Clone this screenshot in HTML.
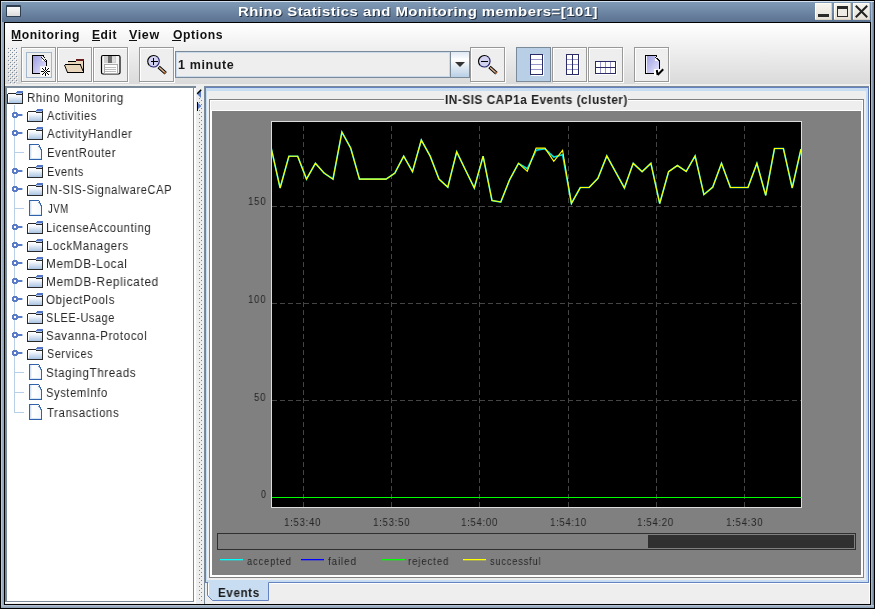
<!DOCTYPE html>
<html><head><meta charset="utf-8"><style>
html,body{margin:0;padding:0;width:875px;height:609px;overflow:hidden;background:#000}
body{position:relative;font-family:"Liberation Sans", sans-serif}
</style></head><body>
<div style="position:absolute;left:0px;top:0px;width:875px;height:609px;background:#000"></div>
<div style="position:absolute;left:1px;top:1px;width:873px;height:607px;background:linear-gradient(90deg,#c9d6e4 0px,#9fb2c7 1px,#8ea3ba 3px)"></div>
<div style="position:absolute;left:1px;top:1px;width:873px;height:1px;background:#d4e0ec"></div>
<div style="position:absolute;left:2px;top:2px;width:871px;height:20px;background:linear-gradient(#7f9ab6,#5b7290)"></div>
<div style="position:absolute;left:1px;top:605px;width:873px;height:3px;background:linear-gradient(#b9c7d6,#8598ae)"></div>
<div style="position:absolute;left:871px;top:2px;width:3px;height:603px;background:linear-gradient(90deg,#b8c6d5,#5f7590)"></div>
<div style="position:absolute;left:4px;top:22px;width:867px;height:583px;background:#000"></div>
<div style="position:absolute;left:6px;top:5px;width:15px;height:12px;background:#2f3f52;border-radius:1px"></div>
<div style="position:absolute;left:7px;top:7px;width:13px;height:9px;background:linear-gradient(#fafafa,#dcdcdc)"></div>
<div style="position:absolute;left:815px;top:3px;width:17px;height:17px;background:#d9d2c4"></div>
<div style="position:absolute;left:815px;top:3px;width:16px;height:16px;background:#fffdf6"></div>
<div style="position:absolute;left:816px;top:4px;width:15px;height:15px;background:linear-gradient(#f6f4ef,#e6e2da)"></div>
<div style="position:absolute;left:834px;top:3px;width:17px;height:17px;background:#d9d2c4"></div>
<div style="position:absolute;left:834px;top:3px;width:16px;height:16px;background:#fffdf6"></div>
<div style="position:absolute;left:835px;top:4px;width:15px;height:15px;background:linear-gradient(#f6f4ef,#e6e2da)"></div>
<div style="position:absolute;left:853px;top:3px;width:17px;height:17px;background:#d9d2c4"></div>
<div style="position:absolute;left:853px;top:3px;width:16px;height:16px;background:#fffdf6"></div>
<div style="position:absolute;left:854px;top:4px;width:15px;height:15px;background:linear-gradient(#f6f4ef,#e6e2da)"></div>
<div style="position:absolute;left:818px;top:14px;width:11px;height:3px;background:#2a2a2a"></div>
<div style="position:absolute;left:837px;top:6px;width:11px;height:11px;background:#2a2a2a"></div>
<div style="position:absolute;left:838px;top:9px;width:9px;height:7px;background:#eeebe5"></div>
<svg style="position:absolute;left:853px;top:3px" width="17" height="17"><path d="M3.5 3.5 L13.5 13.5 M13.5 3.5 L3.5 13.5" stroke="#222" stroke-width="2" stroke-linecap="square"/></svg>
<div style="position:absolute;left:238.85048231511254px;top:6.23px;font-size:13px;font-weight:bold;color:#1a2430;line-height:14.95px;white-space:pre;will-change:transform;transform:scaleX(1.1495176848874598);transform-origin:0 0;opacity:0.85;letter-spacing:0.4px;">Rhino Statistics and Monitoring members=[101]</div>
<div style="position:absolute;left:237.85048231511254px;top:5.23px;font-size:13px;font-weight:bold;color:#fff;line-height:14.95px;white-space:pre;will-change:transform;transform:scaleX(1.1495176848874598);transform-origin:0 0;;letter-spacing:0.4px;">Rhino Statistics and Monitoring members=[101]</div>
<div style="position:absolute;left:5px;top:23px;width:865px;height:581px;background:#eeeeee"></div>
<div style="position:absolute;left:5px;top:23px;width:865px;height:61px;background:linear-gradient(#ffffff,#dadada)"></div>
<div style="position:absolute;left:5px;top:84px;width:865px;height:2px;background:#eeeeee"></div>
<div style="position:absolute;left:10.984848484848484px;top:29.14px;font-size:12px;font-weight:bold;color:#111;line-height:13.80px;white-space:pre;will-change:transform;transform:scaleX(1.0151515151515151);transform-origin:0 0;;letter-spacing:0.6px;">Monitoring</div>
<div style="position:absolute;left:12px;top:40px;width:10px;height:1px;background:#111"></div>
<div style="position:absolute;left:91.50434782608696px;top:29.14px;font-size:12px;font-weight:bold;color:#111;line-height:13.80px;white-space:pre;will-change:transform;transform:scaleX(0.9956521739130437);transform-origin:0 0;;letter-spacing:0.6px;">Edit</div>
<div style="position:absolute;left:92px;top:40px;width:8px;height:1px;background:#111"></div>
<div style="position:absolute;left:128.9px;top:29.14px;font-size:12px;font-weight:bold;color:#111;line-height:13.80px;white-space:pre;will-change:transform;transform:scaleX(1.0413793103448272);transform-origin:0 0;;letter-spacing:0.6px;">View</div>
<div style="position:absolute;left:129px;top:40px;width:8px;height:1px;background:#111"></div>
<div style="position:absolute;left:172.5px;top:29.14px;font-size:12px;font-weight:bold;color:#111;line-height:13.80px;white-space:pre;will-change:transform;transform:scaleX(1.0145833333333332);transform-origin:0 0;;letter-spacing:0.6px;">Options</div>
<div style="position:absolute;left:172px;top:40px;width:9px;height:1px;background:#111"></div>
<svg style="position:absolute;left:0;top:0" width="30" height="90"><rect x="8" y="48" width="1" height="1" fill="#7a8a99"/><rect x="9" y="49" width="1" height="1" fill="#fff"/><rect x="12" y="48" width="1" height="1" fill="#7a8a99"/><rect x="13" y="49" width="1" height="1" fill="#fff"/><rect x="16" y="48" width="1" height="1" fill="#7a8a99"/><rect x="17" y="49" width="1" height="1" fill="#fff"/><rect x="10" y="50" width="1" height="1" fill="#7a8a99"/><rect x="11" y="51" width="1" height="1" fill="#fff"/><rect x="14" y="50" width="1" height="1" fill="#7a8a99"/><rect x="15" y="51" width="1" height="1" fill="#fff"/><rect x="8" y="52" width="1" height="1" fill="#7a8a99"/><rect x="9" y="53" width="1" height="1" fill="#fff"/><rect x="12" y="52" width="1" height="1" fill="#7a8a99"/><rect x="13" y="53" width="1" height="1" fill="#fff"/><rect x="16" y="52" width="1" height="1" fill="#7a8a99"/><rect x="17" y="53" width="1" height="1" fill="#fff"/><rect x="10" y="54" width="1" height="1" fill="#7a8a99"/><rect x="11" y="55" width="1" height="1" fill="#fff"/><rect x="14" y="54" width="1" height="1" fill="#7a8a99"/><rect x="15" y="55" width="1" height="1" fill="#fff"/><rect x="8" y="56" width="1" height="1" fill="#7a8a99"/><rect x="9" y="57" width="1" height="1" fill="#fff"/><rect x="12" y="56" width="1" height="1" fill="#7a8a99"/><rect x="13" y="57" width="1" height="1" fill="#fff"/><rect x="16" y="56" width="1" height="1" fill="#7a8a99"/><rect x="17" y="57" width="1" height="1" fill="#fff"/><rect x="10" y="58" width="1" height="1" fill="#7a8a99"/><rect x="11" y="59" width="1" height="1" fill="#fff"/><rect x="14" y="58" width="1" height="1" fill="#7a8a99"/><rect x="15" y="59" width="1" height="1" fill="#fff"/><rect x="8" y="60" width="1" height="1" fill="#7a8a99"/><rect x="9" y="61" width="1" height="1" fill="#fff"/><rect x="12" y="60" width="1" height="1" fill="#7a8a99"/><rect x="13" y="61" width="1" height="1" fill="#fff"/><rect x="16" y="60" width="1" height="1" fill="#7a8a99"/><rect x="17" y="61" width="1" height="1" fill="#fff"/><rect x="10" y="62" width="1" height="1" fill="#7a8a99"/><rect x="11" y="63" width="1" height="1" fill="#fff"/><rect x="14" y="62" width="1" height="1" fill="#7a8a99"/><rect x="15" y="63" width="1" height="1" fill="#fff"/><rect x="8" y="64" width="1" height="1" fill="#7a8a99"/><rect x="9" y="65" width="1" height="1" fill="#fff"/><rect x="12" y="64" width="1" height="1" fill="#7a8a99"/><rect x="13" y="65" width="1" height="1" fill="#fff"/><rect x="16" y="64" width="1" height="1" fill="#7a8a99"/><rect x="17" y="65" width="1" height="1" fill="#fff"/><rect x="10" y="66" width="1" height="1" fill="#7a8a99"/><rect x="11" y="67" width="1" height="1" fill="#fff"/><rect x="14" y="66" width="1" height="1" fill="#7a8a99"/><rect x="15" y="67" width="1" height="1" fill="#fff"/><rect x="8" y="68" width="1" height="1" fill="#7a8a99"/><rect x="9" y="69" width="1" height="1" fill="#fff"/><rect x="12" y="68" width="1" height="1" fill="#7a8a99"/><rect x="13" y="69" width="1" height="1" fill="#fff"/><rect x="16" y="68" width="1" height="1" fill="#7a8a99"/><rect x="17" y="69" width="1" height="1" fill="#fff"/><rect x="10" y="70" width="1" height="1" fill="#7a8a99"/><rect x="11" y="71" width="1" height="1" fill="#fff"/><rect x="14" y="70" width="1" height="1" fill="#7a8a99"/><rect x="15" y="71" width="1" height="1" fill="#fff"/><rect x="8" y="72" width="1" height="1" fill="#7a8a99"/><rect x="9" y="73" width="1" height="1" fill="#fff"/><rect x="12" y="72" width="1" height="1" fill="#7a8a99"/><rect x="13" y="73" width="1" height="1" fill="#fff"/><rect x="16" y="72" width="1" height="1" fill="#7a8a99"/><rect x="17" y="73" width="1" height="1" fill="#fff"/><rect x="10" y="74" width="1" height="1" fill="#7a8a99"/><rect x="11" y="75" width="1" height="1" fill="#fff"/><rect x="14" y="74" width="1" height="1" fill="#7a8a99"/><rect x="15" y="75" width="1" height="1" fill="#fff"/><rect x="8" y="76" width="1" height="1" fill="#7a8a99"/><rect x="9" y="77" width="1" height="1" fill="#fff"/><rect x="12" y="76" width="1" height="1" fill="#7a8a99"/><rect x="13" y="77" width="1" height="1" fill="#fff"/><rect x="16" y="76" width="1" height="1" fill="#7a8a99"/><rect x="17" y="77" width="1" height="1" fill="#fff"/><rect x="10" y="78" width="1" height="1" fill="#7a8a99"/><rect x="11" y="79" width="1" height="1" fill="#fff"/><rect x="14" y="78" width="1" height="1" fill="#7a8a99"/><rect x="15" y="79" width="1" height="1" fill="#fff"/><rect x="8" y="80" width="1" height="1" fill="#7a8a99"/><rect x="9" y="81" width="1" height="1" fill="#fff"/><rect x="12" y="80" width="1" height="1" fill="#7a8a99"/><rect x="13" y="81" width="1" height="1" fill="#fff"/><rect x="16" y="80" width="1" height="1" fill="#7a8a99"/><rect x="17" y="81" width="1" height="1" fill="#fff"/><rect x="10" y="82" width="1" height="1" fill="#7a8a99"/><rect x="11" y="83" width="1" height="1" fill="#fff"/><rect x="14" y="82" width="1" height="1" fill="#7a8a99"/><rect x="15" y="83" width="1" height="1" fill="#fff"/></svg>
<div style="position:absolute;left:22px;top:48px;width:35px;height:35px;box-sizing:border-box;border:1px solid #fff"></div>
<div style="position:absolute;left:21px;top:47px;width:35px;height:35px;box-sizing:border-box;border:1px solid #999;background:#eeeeee"></div>
<div style="position:absolute;left:22px;top:48px;width:33px;height:33px;box-sizing:border-box;border-left:1px solid #fff;border-top:1px solid #fff"></div>
<div style="position:absolute;left:58px;top:48px;width:35px;height:35px;box-sizing:border-box;border:1px solid #fff"></div>
<div style="position:absolute;left:57px;top:47px;width:35px;height:35px;box-sizing:border-box;border:1px solid #999;background:#eeeeee"></div>
<div style="position:absolute;left:58px;top:48px;width:33px;height:33px;box-sizing:border-box;border-left:1px solid #fff;border-top:1px solid #fff"></div>
<div style="position:absolute;left:94px;top:48px;width:35px;height:35px;box-sizing:border-box;border:1px solid #fff"></div>
<div style="position:absolute;left:93px;top:47px;width:35px;height:35px;box-sizing:border-box;border:1px solid #999;background:#eeeeee"></div>
<div style="position:absolute;left:94px;top:48px;width:33px;height:33px;box-sizing:border-box;border-left:1px solid #fff;border-top:1px solid #fff"></div>
<div style="position:absolute;left:140px;top:48px;width:35px;height:35px;box-sizing:border-box;border:1px solid #fff"></div>
<div style="position:absolute;left:139px;top:47px;width:35px;height:35px;box-sizing:border-box;border:1px solid #999;background:#eeeeee"></div>
<div style="position:absolute;left:140px;top:48px;width:33px;height:33px;box-sizing:border-box;border-left:1px solid #fff;border-top:1px solid #fff"></div>
<div style="position:absolute;left:471px;top:48px;width:35px;height:35px;box-sizing:border-box;border:1px solid #fff"></div>
<div style="position:absolute;left:470px;top:47px;width:35px;height:35px;box-sizing:border-box;border:1px solid #999;background:#eeeeee"></div>
<div style="position:absolute;left:471px;top:48px;width:33px;height:33px;box-sizing:border-box;border-left:1px solid #fff;border-top:1px solid #fff"></div>
<div style="position:absolute;left:553px;top:48px;width:35px;height:35px;box-sizing:border-box;border:1px solid #fff"></div>
<div style="position:absolute;left:552px;top:47px;width:35px;height:35px;box-sizing:border-box;border:1px solid #999;background:#eeeeee"></div>
<div style="position:absolute;left:553px;top:48px;width:33px;height:33px;box-sizing:border-box;border-left:1px solid #fff;border-top:1px solid #fff"></div>
<div style="position:absolute;left:589px;top:48px;width:35px;height:35px;box-sizing:border-box;border:1px solid #fff"></div>
<div style="position:absolute;left:588px;top:47px;width:35px;height:35px;box-sizing:border-box;border:1px solid #999;background:#eeeeee"></div>
<div style="position:absolute;left:589px;top:48px;width:33px;height:33px;box-sizing:border-box;border-left:1px solid #fff;border-top:1px solid #fff"></div>
<div style="position:absolute;left:635px;top:48px;width:35px;height:35px;box-sizing:border-box;border:1px solid #fff"></div>
<div style="position:absolute;left:634px;top:47px;width:35px;height:35px;box-sizing:border-box;border:1px solid #999;background:#eeeeee"></div>
<div style="position:absolute;left:635px;top:48px;width:33px;height:33px;box-sizing:border-box;border-left:1px solid #fff;border-top:1px solid #fff"></div>
<div style="position:absolute;left:516px;top:47px;width:35px;height:35px;box-sizing:border-box;border:1px solid #7a8a99;background:#b8cfe5"></div>
<div style="position:absolute;left:26px;top:52px;width:26px;height:26px;box-sizing:border-box;border:1px solid #a3b8cc"></div>
<svg style="position:absolute;left:0;top:0" width="700" height="90" shape-rendering="crispEdges">
<defs>
<linearGradient id="lav" x1="0" y1="0" x2="1" y2="1"><stop offset="0" stop-color="#9c9ce0"/><stop offset="1" stop-color="#e8e8ff"/></linearGradient>
<linearGradient id="btn" x1="0" y1="0" x2="0" y2="1"><stop offset="0" stop-color="#dde8f3"/><stop offset="0.3" stop-color="#ffffff"/><stop offset="1" stop-color="#b8cfe5"/></linearGradient>
</defs>
<!-- new doc -->
<path d="M33 56 H42 L46 61 V66 H41 V73 H33 Z" fill="url(#lav)" shape-rendering="auto"/>
<path d="M42 56 L46 61 H42 Z" fill="#fff" shape-rendering="auto"/>
<rect x="32" y="55" width="12" height="1" fill="#000"/>
<rect x="32" y="55" width="1" height="19" fill="#000"/>
<rect x="32" y="73" width="9" height="1" fill="#000"/>
<rect x="46" y="61" width="1" height="5" fill="#000"/>
<rect x="43" y="56" width="1" height="1" fill="#000"/><rect x="44" y="57" width="1" height="1" fill="#000"/><rect x="45" y="59" width="1" height="1" fill="#000"/><rect x="46" y="60" width="1" height="1" fill="#000"/>
<rect x="41" y="57" width="1" height="1" fill="#222"/><rect x="42" y="58" width="1" height="1" fill="#222"/><rect x="43" y="59" width="1" height="1" fill="#222"/><rect x="44" y="60" width="1" height="1" fill="#222"/><rect x="45" y="61" width="1" height="1" fill="#222"/>
<rect x="40" y="66" width="11" height="11" fill="#eeeeee"/>
<rect x="41" y="67" width="9" height="9" fill="#fff"/>
<rect x="45" y="67" width="1" height="1" fill="#000"/><rect x="45" y="68" width="1" height="1" fill="#000"/><rect x="45" y="69" width="1" height="1" fill="#000"/><rect x="45" y="73" width="1" height="1" fill="#000"/><rect x="45" y="74" width="1" height="1" fill="#000"/><rect x="45" y="75" width="1" height="1" fill="#000"/><rect x="41" y="71" width="1" height="1" fill="#000"/><rect x="42" y="71" width="1" height="1" fill="#000"/><rect x="43" y="71" width="1" height="1" fill="#000"/><rect x="47" y="71" width="1" height="1" fill="#000"/><rect x="48" y="71" width="1" height="1" fill="#000"/><rect x="49" y="71" width="1" height="1" fill="#000"/><rect x="42" y="68" width="1" height="1" fill="#000"/><rect x="43" y="69" width="1" height="1" fill="#000"/><rect x="44" y="70" width="1" height="1" fill="#000"/><rect x="48" y="68" width="1" height="1" fill="#000"/><rect x="47" y="69" width="1" height="1" fill="#000"/><rect x="46" y="70" width="1" height="1" fill="#000"/><rect x="44" y="72" width="1" height="1" fill="#000"/><rect x="43" y="73" width="1" height="1" fill="#000"/><rect x="42" y="74" width="1" height="1" fill="#000"/><rect x="46" y="72" width="1" height="1" fill="#000"/><rect x="47" y="73" width="1" height="1" fill="#000"/><rect x="48" y="74" width="1" height="1" fill="#000"/><rect x="45" y="71" width="1" height="1" fill="#000"/>
<!-- open folder -->
<path d="M68 61.5 H76 L77 60 H84 V72.5 H67.5 L64.5 64.5 H68 Z" fill="#e9d5bb"/>
<path d="M76 59.5 H84" stroke="#6a1c1c" stroke-width="2"/>
<path d="M67.5 61.5 H76 M83.5 61 V72.5 H67 M65 64.5 H80.5" stroke="#000" fill="none"/>
<path d="M64.5 65 L67.5 72.5 M80.5 65 L83 71" stroke="#000" fill="none" shape-rendering="auto"/>
<!-- floppy -->
<rect x="101.5" y="55.5" width="18.5" height="18.5" rx="1.5" fill="#f4f4f4" stroke="#000" stroke-width="1.2" shape-rendering="auto"/>
<rect x="104" y="56" width="12" height="7" fill="#cfcfcf"/>
<rect x="108" y="56" width="4" height="7" fill="#6e6e6e"/>
<rect x="112" y="57" width="3" height="5" fill="#dedede"/>
<rect x="104" y="64.5" width="13" height="9" fill="#fff" stroke="#aaa" stroke-width="1"/>
<path d="M105 67.5 H116 M105 69.5 H116 M105 71.5 H116" stroke="#bbb"/>
<!-- zoom in -->
<circle cx="153.5" cy="61.3" r="5.9" fill="#d2d2f0" shape-rendering="auto"/>
<path d="M149.33 65.47 A5.9 5.9 0 0 1 157.67 57.13" stroke="#000" stroke-width="1.1" fill="none" shape-rendering="auto"/>
<path d="M157.67 57.13 A5.9 5.9 0 0 1 149.33 65.47" stroke="#22226a" stroke-width="1.1" fill="none" shape-rendering="auto"/>
<rect x="150.5" y="60.8" width="7" height="1.3" fill="#000"/>
<rect x="153.0" y="58.099999999999994" width="1.3" height="7" fill="#000"/>
<path d="M158.7 66.89999999999999 L165.7 73.3" stroke="#000" stroke-width="3.4" shape-rendering="auto"/>
<path d="M159.29999999999998 67.49999999999999 L165.39999999999998 73.0" stroke="#e0b898" stroke-width="1.6" shape-rendering="auto"/>
<path d="M164.5 72.1 L165.7 73.3" stroke="#b0602a" stroke-width="2" shape-rendering="auto"/>
<!-- combo -->
<rect x="175.5" y="51.5" width="294" height="26" fill="#eeeeee" stroke="#7a8a99"/>
<rect x="176.5" y="52.5" width="273" height="24" fill="none" stroke="#c8daec"/>
<rect x="451" y="52" width="18" height="25" fill="url(#btn)"/>
<path d="M450.5 51.5 V77.5" stroke="#7a8a99"/>
<path d="M455 62 H465 L460 67 Z" fill="#333" shape-rendering="auto"/>
<!-- zoom out -->
<circle cx="484.3" cy="61.3" r="5.9" fill="#d2d2f0" shape-rendering="auto"/>
<path d="M480.13 65.47 A5.9 5.9 0 0 1 488.47 57.13" stroke="#000" stroke-width="1.1" fill="none" shape-rendering="auto"/>
<path d="M488.47 57.13 A5.9 5.9 0 0 1 480.13 65.47" stroke="#22226a" stroke-width="1.1" fill="none" shape-rendering="auto"/>
<rect x="481.3" y="60.8" width="7" height="1.3" fill="#000"/>
<path d="M489.5 66.89999999999999 L496.5 73.3" stroke="#000" stroke-width="3.4" shape-rendering="auto"/>
<path d="M490.1 67.49999999999999 L496.2 73.0" stroke="#e0b898" stroke-width="1.6" shape-rendering="auto"/>
<path d="M495.3 72.1 L496.5 73.3" stroke="#b0602a" stroke-width="2" shape-rendering="auto"/>
<!-- layout 1 -->
<rect x="531" y="55" width="13" height="21" fill="#fff"/><rect x="530" y="54" width="13" height="1" fill="#2b2b66"/><rect x="530" y="74" width="13" height="1" fill="#2b2b66"/><rect x="530" y="54" width="1" height="21" fill="#2b2b66"/><rect x="542" y="54" width="1" height="21" fill="#2b2b66"/>
<rect x="531" y="59" width="11" height="1" fill="#9898cc"/>
<rect x="531" y="64" width="11" height="1" fill="#9898cc"/>
<rect x="531" y="69" width="11" height="1" fill="#9898cc"/>
<!-- layout 2 -->
<rect x="567" y="55" width="13" height="21" fill="#fff"/><rect x="566" y="54" width="13" height="1" fill="#2b2b66"/><rect x="566" y="74" width="13" height="1" fill="#2b2b66"/><rect x="566" y="54" width="1" height="21" fill="#2b2b66"/><rect x="578" y="54" width="1" height="21" fill="#2b2b66"/>
<rect x="567" y="59" width="11" height="1" fill="#9898cc"/>
<rect x="567" y="64" width="11" height="1" fill="#9898cc"/>
<rect x="567" y="69" width="11" height="1" fill="#9898cc"/>
<rect x="572" y="55" width="1" height="19" fill="#2b2b66"/>
<!-- layout 3 -->
<rect x="596" y="62" width="21" height="13" fill="#fff"/><rect x="595" y="61" width="21" height="1" fill="#2b2b66"/><rect x="595" y="73" width="21" height="1" fill="#2b2b66"/><rect x="595" y="61" width="1" height="13" fill="#2b2b66"/><rect x="615" y="61" width="1" height="13" fill="#2b2b66"/>
<rect x="600" y="62" width="1" height="11" fill="#9898cc"/>
<rect x="605" y="62" width="1" height="11" fill="#9898cc"/>
<rect x="610" y="62" width="1" height="11" fill="#9898cc"/>
<rect x="596" y="67" width="19" height="1" fill="#2b2b66"/>
<!-- doc check -->
<path d="M646 56 H655 L659 61 V69 H655 V73 H646 Z" fill="url(#lav)" shape-rendering="auto"/>
<path d="M655 56 L659 61 H655 Z" fill="#fff" shape-rendering="auto"/>
<rect x="646" y="56" width="1" height="17" fill="#f4f4ff"/>
<rect x="645" y="55" width="12" height="1" fill="#000"/>
<rect x="645" y="55" width="1" height="19" fill="#000"/>
<rect x="645" y="73" width="11" height="1" fill="#000"/>
<rect x="659" y="61" width="1" height="9" fill="#000"/>
<rect x="656" y="56" width="1" height="1" fill="#000"/><rect x="657" y="58" width="1" height="1" fill="#000"/><rect x="658" y="59" width="1" height="1" fill="#000"/><rect x="659" y="60" width="1" height="1" fill="#000"/>
<rect x="655" y="57" width="1" height="1" fill="#222"/><rect x="656" y="58" width="1" height="1" fill="#222"/><rect x="657" y="59" width="1" height="1" fill="#222"/><rect x="658" y="60" width="1" height="1" fill="#222"/>
<path d="M654 69 H661 L659 76 H654 Z" fill="#fff"/>
<path d="M656.8 70 L657.6 75 M657.6 75 L663.2 69.2" stroke="#000" stroke-width="2" fill="none" shape-rendering="auto"/>
</svg>
<div style="position:absolute;left:177.7576923076923px;top:59.14px;font-size:12px;font-weight:bold;color:#1a1a1a;line-height:13.80px;white-space:pre;will-change:transform;transform:scaleX(1.0423076923076922);transform-origin:0 0;;letter-spacing:0.6px;">1 minute</div>
<div style="position:absolute;left:5px;top:86px;width:190px;height:517px;background:#fff"></div>
<div style="position:absolute;left:5px;top:86px;width:191px;height:2px;background:#7a8a99"></div>
<div style="position:absolute;left:5px;top:86px;width:2px;height:516px;background:#7a8a99"></div>
<div style="position:absolute;left:193px;top:86px;width:1px;height:516px;background:#7a8a99"></div>
<div style="position:absolute;left:5px;top:601px;width:189px;height:1px;background:#7a8a99"></div>
<div style="position:absolute;left:194px;top:88px;width:1px;height:515px;background:#fff"></div>
<div style="position:absolute;left:5px;top:602px;width:190px;height:1px;background:#fff"></div>
<div style="position:absolute;left:194px;top:88px;width:2px;height:516px;background:#fff"></div>
<div style="position:absolute;left:196px;top:88px;width:8px;height:516px;background:#eeeeee"></div>
<svg style="position:absolute;left:0;top:0" width="210" height="609" shape-rendering="crispEdges"><rect x="199" y="98" width="1" height="1" fill="#7a8a99"/><rect x="201" y="100" width="1" height="1" fill="#7a8a99"/><rect x="199" y="102" width="1" height="1" fill="#7a8a99"/><rect x="201" y="104" width="1" height="1" fill="#7a8a99"/><rect x="199" y="106" width="1" height="1" fill="#7a8a99"/><rect x="201" y="108" width="1" height="1" fill="#7a8a99"/><rect x="199" y="110" width="1" height="1" fill="#7a8a99"/><rect x="201" y="112" width="1" height="1" fill="#7a8a99"/><rect x="199" y="114" width="1" height="1" fill="#7a8a99"/><rect x="201" y="116" width="1" height="1" fill="#7a8a99"/><rect x="199" y="118" width="1" height="1" fill="#7a8a99"/><rect x="201" y="120" width="1" height="1" fill="#7a8a99"/><rect x="199" y="122" width="1" height="1" fill="#7a8a99"/><rect x="201" y="124" width="1" height="1" fill="#7a8a99"/><rect x="199" y="126" width="1" height="1" fill="#7a8a99"/><rect x="201" y="128" width="1" height="1" fill="#7a8a99"/><rect x="199" y="130" width="1" height="1" fill="#7a8a99"/><rect x="201" y="132" width="1" height="1" fill="#7a8a99"/><rect x="199" y="134" width="1" height="1" fill="#7a8a99"/><rect x="201" y="136" width="1" height="1" fill="#7a8a99"/><rect x="199" y="138" width="1" height="1" fill="#7a8a99"/><rect x="201" y="140" width="1" height="1" fill="#7a8a99"/><rect x="199" y="142" width="1" height="1" fill="#7a8a99"/><rect x="201" y="144" width="1" height="1" fill="#7a8a99"/><rect x="199" y="146" width="1" height="1" fill="#7a8a99"/><rect x="201" y="148" width="1" height="1" fill="#7a8a99"/><rect x="199" y="150" width="1" height="1" fill="#7a8a99"/><rect x="201" y="152" width="1" height="1" fill="#7a8a99"/><rect x="199" y="154" width="1" height="1" fill="#7a8a99"/><rect x="201" y="156" width="1" height="1" fill="#7a8a99"/><rect x="199" y="158" width="1" height="1" fill="#7a8a99"/><rect x="201" y="160" width="1" height="1" fill="#7a8a99"/><rect x="199" y="162" width="1" height="1" fill="#7a8a99"/><rect x="201" y="164" width="1" height="1" fill="#7a8a99"/><rect x="199" y="166" width="1" height="1" fill="#7a8a99"/><rect x="201" y="168" width="1" height="1" fill="#7a8a99"/><rect x="199" y="170" width="1" height="1" fill="#7a8a99"/><rect x="201" y="172" width="1" height="1" fill="#7a8a99"/><rect x="199" y="174" width="1" height="1" fill="#7a8a99"/><rect x="201" y="176" width="1" height="1" fill="#7a8a99"/><rect x="199" y="178" width="1" height="1" fill="#7a8a99"/><rect x="201" y="180" width="1" height="1" fill="#7a8a99"/><rect x="199" y="182" width="1" height="1" fill="#7a8a99"/><rect x="201" y="184" width="1" height="1" fill="#7a8a99"/><rect x="199" y="186" width="1" height="1" fill="#7a8a99"/><rect x="201" y="188" width="1" height="1" fill="#7a8a99"/><rect x="199" y="190" width="1" height="1" fill="#7a8a99"/><rect x="201" y="192" width="1" height="1" fill="#7a8a99"/><rect x="199" y="194" width="1" height="1" fill="#7a8a99"/><rect x="201" y="196" width="1" height="1" fill="#7a8a99"/><rect x="199" y="198" width="1" height="1" fill="#7a8a99"/><rect x="201" y="200" width="1" height="1" fill="#7a8a99"/><rect x="199" y="202" width="1" height="1" fill="#7a8a99"/><rect x="201" y="204" width="1" height="1" fill="#7a8a99"/><rect x="199" y="206" width="1" height="1" fill="#7a8a99"/><rect x="201" y="208" width="1" height="1" fill="#7a8a99"/><rect x="199" y="210" width="1" height="1" fill="#7a8a99"/><rect x="201" y="212" width="1" height="1" fill="#7a8a99"/><rect x="199" y="214" width="1" height="1" fill="#7a8a99"/><rect x="201" y="216" width="1" height="1" fill="#7a8a99"/><rect x="199" y="218" width="1" height="1" fill="#7a8a99"/><rect x="201" y="220" width="1" height="1" fill="#7a8a99"/><rect x="199" y="222" width="1" height="1" fill="#7a8a99"/><rect x="201" y="224" width="1" height="1" fill="#7a8a99"/><rect x="199" y="226" width="1" height="1" fill="#7a8a99"/><rect x="201" y="228" width="1" height="1" fill="#7a8a99"/><rect x="199" y="230" width="1" height="1" fill="#7a8a99"/><rect x="201" y="232" width="1" height="1" fill="#7a8a99"/><rect x="199" y="234" width="1" height="1" fill="#7a8a99"/><rect x="201" y="236" width="1" height="1" fill="#7a8a99"/><rect x="199" y="238" width="1" height="1" fill="#7a8a99"/><rect x="201" y="240" width="1" height="1" fill="#7a8a99"/><rect x="199" y="242" width="1" height="1" fill="#7a8a99"/><rect x="201" y="244" width="1" height="1" fill="#7a8a99"/><rect x="199" y="246" width="1" height="1" fill="#7a8a99"/><rect x="201" y="248" width="1" height="1" fill="#7a8a99"/><rect x="199" y="250" width="1" height="1" fill="#7a8a99"/><rect x="201" y="252" width="1" height="1" fill="#7a8a99"/><rect x="199" y="254" width="1" height="1" fill="#7a8a99"/><rect x="201" y="256" width="1" height="1" fill="#7a8a99"/><rect x="199" y="258" width="1" height="1" fill="#7a8a99"/><rect x="201" y="260" width="1" height="1" fill="#7a8a99"/><rect x="199" y="262" width="1" height="1" fill="#7a8a99"/><rect x="201" y="264" width="1" height="1" fill="#7a8a99"/><rect x="199" y="266" width="1" height="1" fill="#7a8a99"/><rect x="201" y="268" width="1" height="1" fill="#7a8a99"/><rect x="199" y="270" width="1" height="1" fill="#7a8a99"/><rect x="201" y="272" width="1" height="1" fill="#7a8a99"/><rect x="199" y="274" width="1" height="1" fill="#7a8a99"/><rect x="201" y="276" width="1" height="1" fill="#7a8a99"/><rect x="199" y="278" width="1" height="1" fill="#7a8a99"/><rect x="201" y="280" width="1" height="1" fill="#7a8a99"/><rect x="199" y="282" width="1" height="1" fill="#7a8a99"/><rect x="201" y="284" width="1" height="1" fill="#7a8a99"/><rect x="199" y="286" width="1" height="1" fill="#7a8a99"/><rect x="201" y="288" width="1" height="1" fill="#7a8a99"/><rect x="199" y="290" width="1" height="1" fill="#7a8a99"/><rect x="201" y="292" width="1" height="1" fill="#7a8a99"/><rect x="199" y="294" width="1" height="1" fill="#7a8a99"/><rect x="201" y="296" width="1" height="1" fill="#7a8a99"/><rect x="199" y="298" width="1" height="1" fill="#7a8a99"/><rect x="201" y="300" width="1" height="1" fill="#7a8a99"/><rect x="199" y="302" width="1" height="1" fill="#7a8a99"/><rect x="201" y="304" width="1" height="1" fill="#7a8a99"/><rect x="199" y="306" width="1" height="1" fill="#7a8a99"/><rect x="201" y="308" width="1" height="1" fill="#7a8a99"/><rect x="199" y="310" width="1" height="1" fill="#7a8a99"/><rect x="201" y="312" width="1" height="1" fill="#7a8a99"/><rect x="199" y="314" width="1" height="1" fill="#7a8a99"/><rect x="201" y="316" width="1" height="1" fill="#7a8a99"/><rect x="199" y="318" width="1" height="1" fill="#7a8a99"/><rect x="201" y="320" width="1" height="1" fill="#7a8a99"/><rect x="199" y="322" width="1" height="1" fill="#7a8a99"/><rect x="201" y="324" width="1" height="1" fill="#7a8a99"/><rect x="199" y="326" width="1" height="1" fill="#7a8a99"/><rect x="201" y="328" width="1" height="1" fill="#7a8a99"/><rect x="199" y="330" width="1" height="1" fill="#7a8a99"/><rect x="201" y="332" width="1" height="1" fill="#7a8a99"/><rect x="199" y="334" width="1" height="1" fill="#7a8a99"/><rect x="201" y="336" width="1" height="1" fill="#7a8a99"/><rect x="199" y="338" width="1" height="1" fill="#7a8a99"/><rect x="201" y="340" width="1" height="1" fill="#7a8a99"/><rect x="199" y="342" width="1" height="1" fill="#7a8a99"/><rect x="201" y="344" width="1" height="1" fill="#7a8a99"/><rect x="199" y="346" width="1" height="1" fill="#7a8a99"/><rect x="201" y="348" width="1" height="1" fill="#7a8a99"/><rect x="199" y="350" width="1" height="1" fill="#7a8a99"/><rect x="201" y="352" width="1" height="1" fill="#7a8a99"/><rect x="199" y="354" width="1" height="1" fill="#7a8a99"/><rect x="201" y="356" width="1" height="1" fill="#7a8a99"/><rect x="199" y="358" width="1" height="1" fill="#7a8a99"/><rect x="201" y="360" width="1" height="1" fill="#7a8a99"/><rect x="199" y="362" width="1" height="1" fill="#7a8a99"/><rect x="201" y="364" width="1" height="1" fill="#7a8a99"/><rect x="199" y="366" width="1" height="1" fill="#7a8a99"/><rect x="201" y="368" width="1" height="1" fill="#7a8a99"/><rect x="199" y="370" width="1" height="1" fill="#7a8a99"/><rect x="201" y="372" width="1" height="1" fill="#7a8a99"/><rect x="199" y="374" width="1" height="1" fill="#7a8a99"/><rect x="201" y="376" width="1" height="1" fill="#7a8a99"/><rect x="199" y="378" width="1" height="1" fill="#7a8a99"/><rect x="201" y="380" width="1" height="1" fill="#7a8a99"/><rect x="199" y="382" width="1" height="1" fill="#7a8a99"/><rect x="201" y="384" width="1" height="1" fill="#7a8a99"/><rect x="199" y="386" width="1" height="1" fill="#7a8a99"/><rect x="201" y="388" width="1" height="1" fill="#7a8a99"/><rect x="199" y="390" width="1" height="1" fill="#7a8a99"/><rect x="201" y="392" width="1" height="1" fill="#7a8a99"/><rect x="199" y="394" width="1" height="1" fill="#7a8a99"/><rect x="201" y="396" width="1" height="1" fill="#7a8a99"/><rect x="199" y="398" width="1" height="1" fill="#7a8a99"/><rect x="201" y="400" width="1" height="1" fill="#7a8a99"/><rect x="199" y="402" width="1" height="1" fill="#7a8a99"/><rect x="201" y="404" width="1" height="1" fill="#7a8a99"/><rect x="199" y="406" width="1" height="1" fill="#7a8a99"/><rect x="201" y="408" width="1" height="1" fill="#7a8a99"/><rect x="199" y="410" width="1" height="1" fill="#7a8a99"/><rect x="201" y="412" width="1" height="1" fill="#7a8a99"/><rect x="199" y="414" width="1" height="1" fill="#7a8a99"/><rect x="201" y="416" width="1" height="1" fill="#7a8a99"/><rect x="199" y="418" width="1" height="1" fill="#7a8a99"/><rect x="201" y="420" width="1" height="1" fill="#7a8a99"/><rect x="199" y="422" width="1" height="1" fill="#7a8a99"/><rect x="201" y="424" width="1" height="1" fill="#7a8a99"/><rect x="199" y="426" width="1" height="1" fill="#7a8a99"/><rect x="201" y="428" width="1" height="1" fill="#7a8a99"/><rect x="199" y="430" width="1" height="1" fill="#7a8a99"/><rect x="201" y="432" width="1" height="1" fill="#7a8a99"/><rect x="199" y="434" width="1" height="1" fill="#7a8a99"/><rect x="201" y="436" width="1" height="1" fill="#7a8a99"/><rect x="199" y="438" width="1" height="1" fill="#7a8a99"/><rect x="201" y="440" width="1" height="1" fill="#7a8a99"/><rect x="199" y="442" width="1" height="1" fill="#7a8a99"/><rect x="201" y="444" width="1" height="1" fill="#7a8a99"/><rect x="199" y="446" width="1" height="1" fill="#7a8a99"/><rect x="201" y="448" width="1" height="1" fill="#7a8a99"/><rect x="199" y="450" width="1" height="1" fill="#7a8a99"/><rect x="201" y="452" width="1" height="1" fill="#7a8a99"/><rect x="199" y="454" width="1" height="1" fill="#7a8a99"/><rect x="201" y="456" width="1" height="1" fill="#7a8a99"/><rect x="199" y="458" width="1" height="1" fill="#7a8a99"/><rect x="201" y="460" width="1" height="1" fill="#7a8a99"/><rect x="199" y="462" width="1" height="1" fill="#7a8a99"/><rect x="201" y="464" width="1" height="1" fill="#7a8a99"/><rect x="199" y="466" width="1" height="1" fill="#7a8a99"/><rect x="201" y="468" width="1" height="1" fill="#7a8a99"/><rect x="199" y="470" width="1" height="1" fill="#7a8a99"/><rect x="201" y="472" width="1" height="1" fill="#7a8a99"/><rect x="199" y="474" width="1" height="1" fill="#7a8a99"/><rect x="201" y="476" width="1" height="1" fill="#7a8a99"/><rect x="199" y="478" width="1" height="1" fill="#7a8a99"/><rect x="201" y="480" width="1" height="1" fill="#7a8a99"/><rect x="199" y="482" width="1" height="1" fill="#7a8a99"/><rect x="201" y="484" width="1" height="1" fill="#7a8a99"/><rect x="199" y="486" width="1" height="1" fill="#7a8a99"/><rect x="201" y="488" width="1" height="1" fill="#7a8a99"/><rect x="199" y="490" width="1" height="1" fill="#7a8a99"/><rect x="201" y="492" width="1" height="1" fill="#7a8a99"/><rect x="199" y="494" width="1" height="1" fill="#7a8a99"/><rect x="201" y="496" width="1" height="1" fill="#7a8a99"/><rect x="199" y="498" width="1" height="1" fill="#7a8a99"/><rect x="201" y="500" width="1" height="1" fill="#7a8a99"/><rect x="199" y="502" width="1" height="1" fill="#7a8a99"/><rect x="201" y="504" width="1" height="1" fill="#7a8a99"/><rect x="199" y="506" width="1" height="1" fill="#7a8a99"/><rect x="201" y="508" width="1" height="1" fill="#7a8a99"/><rect x="199" y="510" width="1" height="1" fill="#7a8a99"/><rect x="201" y="512" width="1" height="1" fill="#7a8a99"/><rect x="199" y="514" width="1" height="1" fill="#7a8a99"/><rect x="201" y="516" width="1" height="1" fill="#7a8a99"/><rect x="199" y="518" width="1" height="1" fill="#7a8a99"/><rect x="201" y="520" width="1" height="1" fill="#7a8a99"/><rect x="199" y="522" width="1" height="1" fill="#7a8a99"/><rect x="201" y="524" width="1" height="1" fill="#7a8a99"/><rect x="199" y="526" width="1" height="1" fill="#7a8a99"/><rect x="201" y="528" width="1" height="1" fill="#7a8a99"/><rect x="199" y="530" width="1" height="1" fill="#7a8a99"/><rect x="201" y="532" width="1" height="1" fill="#7a8a99"/><rect x="199" y="534" width="1" height="1" fill="#7a8a99"/><rect x="201" y="536" width="1" height="1" fill="#7a8a99"/><rect x="199" y="538" width="1" height="1" fill="#7a8a99"/><rect x="201" y="540" width="1" height="1" fill="#7a8a99"/><rect x="199" y="542" width="1" height="1" fill="#7a8a99"/><rect x="201" y="544" width="1" height="1" fill="#7a8a99"/><rect x="199" y="546" width="1" height="1" fill="#7a8a99"/><rect x="201" y="548" width="1" height="1" fill="#7a8a99"/><rect x="199" y="550" width="1" height="1" fill="#7a8a99"/><rect x="201" y="552" width="1" height="1" fill="#7a8a99"/><rect x="199" y="554" width="1" height="1" fill="#7a8a99"/><rect x="201" y="556" width="1" height="1" fill="#7a8a99"/><rect x="199" y="558" width="1" height="1" fill="#7a8a99"/><rect x="201" y="560" width="1" height="1" fill="#7a8a99"/><rect x="199" y="562" width="1" height="1" fill="#7a8a99"/><rect x="201" y="564" width="1" height="1" fill="#7a8a99"/><rect x="199" y="566" width="1" height="1" fill="#7a8a99"/><rect x="201" y="568" width="1" height="1" fill="#7a8a99"/><rect x="199" y="570" width="1" height="1" fill="#7a8a99"/><rect x="201" y="572" width="1" height="1" fill="#7a8a99"/><rect x="199" y="574" width="1" height="1" fill="#7a8a99"/><rect x="201" y="576" width="1" height="1" fill="#7a8a99"/><rect x="199" y="578" width="1" height="1" fill="#7a8a99"/><rect x="201" y="580" width="1" height="1" fill="#7a8a99"/><rect x="199" y="582" width="1" height="1" fill="#7a8a99"/><rect x="201" y="584" width="1" height="1" fill="#7a8a99"/><rect x="199" y="586" width="1" height="1" fill="#7a8a99"/><rect x="201" y="588" width="1" height="1" fill="#7a8a99"/><rect x="199" y="590" width="1" height="1" fill="#7a8a99"/><rect x="201" y="592" width="1" height="1" fill="#7a8a99"/><rect x="199" y="594" width="1" height="1" fill="#7a8a99"/><rect x="201" y="596" width="1" height="1" fill="#7a8a99"/><rect x="199" y="598" width="1" height="1" fill="#7a8a99"/><rect x="201" y="600" width="1" height="1" fill="#7a8a99"/><path d="M201 90 L197 94 L201 98 Z" fill="#5f80c8" shape-rendering="auto"/><path d="M201.2 89.8 L197.2 93.8" stroke="#000" stroke-width="1.4" fill="none" shape-rendering="auto"/><path d="M197 102 L201.5 106 L197 110 Z" fill="#5f80c8" shape-rendering="auto"/><rect x="197" y="102" width="1" height="9" fill="#000"/></svg>
<div style="position:absolute;left:203px;top:86px;width:667px;height:518px;background:#eeeeee"></div>
<div style="position:absolute;left:204px;top:86px;width:665px;height:1px;background:#7a8a99"></div>
<div style="position:absolute;left:204px;top:86px;width:1px;height:518px;background:#7a8a99"></div>
<div style="position:absolute;left:205px;top:87px;width:664px;height:1px;background:#6382bf"></div>
<div style="position:absolute;left:205px;top:87px;width:1px;height:496px;background:#6382bf"></div>
<div style="position:absolute;left:868px;top:87px;width:1px;height:496px;background:#6382bf"></div>
<div style="position:absolute;left:206px;top:88px;width:662px;height:3px;background:#c8ddf2"></div>
<div style="position:absolute;left:206px;top:88px;width:1px;height:494px;background:#c8ddf2"></div>
<div style="position:absolute;left:866px;top:88px;width:2px;height:494px;background:#c8ddf2"></div>
<div style="position:absolute;left:206px;top:580px;width:662px;height:2px;background:#c8ddf2"></div>
<div style="position:absolute;left:869px;top:86px;width:1px;height:518px;background:#fff"></div>
<div style="position:absolute;left:205px;top:582px;width:3px;height:1px;background:#6382bf"></div>
<div style="position:absolute;left:268px;top:582px;width:601px;height:1px;background:#6382bf"></div>
<div style="position:absolute;left:269px;top:583px;width:600px;height:1px;background:#fff"></div>
<svg style="position:absolute;left:0;top:0" width="875" height="609"><path d="M207.5 582 V595.5 L212.5 600.5 H268.5 V582 Z" fill="#c8ddf2"/><path d="M207.5 582 V595.5 L212.5 600.5 H268.5 V582.5" stroke="#6382bf" fill="none"/><path d="M208.5 583 V595" stroke="#fff" fill="none"/></svg>
<div style="position:absolute;left:217.62926829268292px;top:587.14px;font-size:12px;font-weight:bold;color:#1a1a1a;line-height:13.80px;white-space:pre;will-change:transform;transform:scaleX(0.9707317073170727);transform-origin:0 0;;letter-spacing:0.6px;">Events</div>
<div style="position:absolute;left:209px;top:99px;width:655px;height:479px;box-sizing:border-box;border:1px solid #808080"></div>
<div style="position:absolute;left:210px;top:100px;width:653px;height:477px;box-sizing:border-box;border:1px solid #fff"></div>
<div style="position:absolute;left:444px;top:94px;width:184px;height:12px;background:#eeeeee"></div>
<div style="position:absolute;left:444.6131147540984px;top:94.14px;font-size:12px;font-weight:bold;color:#222;line-height:13.80px;white-space:pre;will-change:transform;transform:scaleX(0.9868852459016395);transform-origin:0 0;;letter-spacing:0.5px;">IN-SIS CAP1a Events (cluster)</div>
<div style="position:absolute;left:211px;top:110px;width:651px;height:466px;background:#fff"></div>
<div style="position:absolute;left:212px;top:111px;width:649px;height:464px;background:#808080"></div>
<svg style="position:absolute;left:0;top:0" width="875" height="609"><rect x="271.5" y="121.5" width="530" height="386" fill="#000" stroke="#dcdcdc" stroke-width="1"/><path d="M272 206.5 H801" stroke="#444444" stroke-dasharray="5 3" shape-rendering="crispEdges"/><path d="M272 303.5 H801" stroke="#444444" stroke-dasharray="5 3" shape-rendering="crispEdges"/><path d="M272 400.5 H801" stroke="#444444" stroke-dasharray="5 3" shape-rendering="crispEdges"/><path d="M303.5 507 V124" stroke="#444444" stroke-dasharray="5 3" shape-rendering="crispEdges"/><path d="M391.5 507 V124" stroke="#444444" stroke-dasharray="5 3" shape-rendering="crispEdges"/><path d="M479.5 507 V124" stroke="#444444" stroke-dasharray="5 3" shape-rendering="crispEdges"/><path d="M568.5 507 V124" stroke="#444444" stroke-dasharray="5 3" shape-rendering="crispEdges"/><path d="M656.5 507 V124" stroke="#444444" stroke-dasharray="5 3" shape-rendering="crispEdges"/><path d="M744.5 507 V124" stroke="#444444" stroke-dasharray="5 3" shape-rendering="crispEdges"/><path d="M272 497.5 H801" stroke="#00ff00" stroke-width="1.2"/><clipPath id="pc"><rect x="272" y="122" width="529" height="385"/></clipPath><g clip-path="url(#pc)"><polyline points="271.2,148.1 280.1,188.0 288.9,156.2 297.7,156.2 306.5,179.1 315.4,163.3 324.2,173.2 333.0,179.1 341.9,132.1 350.7,148.1 359.5,179.1 368.4,179.1 377.2,179.1 386.0,179.1 394.8,173.2 403.7,156.2 412.5,171.7 421.3,140.0 430.2,156.2 439.0,179.1 447.8,187.2 456.7,151.8 465.5,170.0 474.3,188.0 483.1,156.2 492.0,200.5 500.8,202.0 509.6,179.8 518.5,163.3 527.3,168.8 536.1,150.3 545.0,148.8 553.8,157.0 562.6,154.7 571.4,203.5 580.3,187.5 589.1,187.5 597.9,178.4 606.8,155.9 615.6,171.9 624.4,188.0 633.2,163.3 642.1,171.7 650.9,163.3 659.7,203.5 668.6,171.7 677.4,165.5 686.2,171.4 695.1,155.9 703.9,194.6 712.7,187.2 721.5,163.3 730.4,187.5 739.2,187.5 748.0,187.5 756.9,163.3 765.7,195.4 774.5,148.5 783.4,148.5 792.2,188.0 801.0,149.0" fill="none" stroke="#00e0e0" stroke-width="1.6" stroke-linejoin="miter"/><polyline points="271.2,148.1 280.1,188.0 288.9,156.2 297.7,156.2 306.5,179.1 315.4,163.3 324.2,173.2 333.0,179.1 341.9,132.1 350.7,148.1 359.5,179.1 368.4,179.1 377.2,179.1 386.0,179.1 394.8,173.2 403.7,156.2 412.5,171.7 421.3,140.0 430.2,156.2 439.0,179.1 447.8,187.2 456.7,151.8 465.5,170.0 474.3,188.0 483.1,156.2 492.0,200.5 500.8,202.0 509.6,179.8 518.5,163.3 527.3,171.4 536.1,148.1 545.0,148.1 553.8,161.4 562.6,150.3 571.4,203.5 580.3,187.5 589.1,187.5 597.9,178.4 606.8,155.9 615.6,171.9 624.4,188.0 633.2,163.3 642.1,171.7 650.9,163.3 659.7,203.5 668.6,171.7 677.4,165.5 686.2,171.4 695.1,155.9 703.9,194.6 712.7,187.2 721.5,163.3 730.4,187.5 739.2,187.5 748.0,187.5 756.9,163.3 765.7,195.4 774.5,148.5 783.4,148.5 792.2,188.0 801.0,149.0" fill="none" stroke="#ffff00" stroke-width="1.1" stroke-linejoin="miter"/></g><rect x="217.5" y="533.5" width="638" height="16" fill="none" stroke="#303030"/><rect x="648" y="535" width="206" height="13" fill="#303030"/><rect x="220" y="559" width="23" height="1.3" fill="#00ffff"/><rect x="301" y="559" width="23" height="1.3" fill="#0000ff"/><rect x="382" y="559" width="23" height="1.3" fill="#00ff00"/><rect x="463" y="559" width="23" height="1.3" fill="#ffff00"/></svg>
<div style="position:absolute;left:247.7315789473684px;top:195.04px;font-size:11px;font-weight:normal;color:#262626;line-height:12.65px;white-space:pre;will-change:transform;transform:scaleX(0.8684210526315804);transform-origin:0 0;;letter-spacing:1px;">150</div>
<div style="position:absolute;left:247.83684210526314px;top:293.05px;font-size:11px;font-weight:normal;color:#262626;line-height:12.65px;white-space:pre;will-change:transform;transform:scaleX(0.8631578947368439);transform-origin:0 0;;letter-spacing:1px;">100</div>
<div style="position:absolute;left:253.925px;top:391.05px;font-size:11px;font-weight:normal;color:#262626;line-height:12.65px;white-space:pre;will-change:transform;transform:scaleX(0.875);transform-origin:0 0;;letter-spacing:1px;">50</div>
<div style="position:absolute;left:260.6px;top:488.05px;font-size:11px;font-weight:normal;color:#262626;line-height:12.65px;white-space:pre;will-change:transform;transform:scaleX(0.7999999999999924);transform-origin:0 0;;letter-spacing:0px;">0</div>
<div style="position:absolute;left:283.7225px;top:516.04px;font-size:11px;font-weight:normal;color:#262626;line-height:12.65px;white-space:pre;will-change:transform;transform:scaleX(0.8774999999999992);transform-origin:0 0;;letter-spacing:0.8px;">1:53:40</div>
<div style="position:absolute;left:372.52px;top:516.04px;font-size:11px;font-weight:normal;color:#262626;line-height:12.65px;white-space:pre;will-change:transform;transform:scaleX(0.8800000000000011);transform-origin:0 0;;letter-spacing:0.8px;">1:53:50</div>
<div style="position:absolute;left:460.5275px;top:516.04px;font-size:11px;font-weight:normal;color:#262626;line-height:12.65px;white-space:pre;will-change:transform;transform:scaleX(0.8725000000000008);transform-origin:0 0;;letter-spacing:0.8px;">1:54:00</div>
<div style="position:absolute;left:549.8325000000001px;top:516.04px;font-size:11px;font-weight:normal;color:#262626;line-height:12.65px;white-space:pre;will-change:transform;transform:scaleX(0.8674999999999983);transform-origin:0 0;;letter-spacing:0.8px;">1:54:10</div>
<div style="position:absolute;left:637.4325px;top:516.04px;font-size:11px;font-weight:normal;color:#262626;line-height:12.65px;white-space:pre;will-change:transform;transform:scaleX(0.8675000000000012);transform-origin:0 0;;letter-spacing:0.8px;">1:54:20</div>
<div style="position:absolute;left:726.12px;top:516.04px;font-size:11px;font-weight:normal;color:#262626;line-height:12.65px;white-space:pre;will-change:transform;transform:scaleX(0.8800000000000011);transform-origin:0 0;;letter-spacing:0.8px;">1:54:30</div>
<div style="position:absolute;left:246.85px;top:555.04px;font-size:11px;font-weight:normal;color:#262626;line-height:12.65px;white-space:pre;will-change:transform;transform:scaleX(0.85);transform-origin:0 0;;letter-spacing:1px;">accepted</div>
<div style="position:absolute;left:327.9px;top:555.04px;font-size:11px;font-weight:normal;color:#262626;line-height:12.65px;white-space:pre;will-change:transform;transform:scaleX(0.8935483870967756);transform-origin:0 0;;letter-spacing:1px;">failed</div>
<div style="position:absolute;left:408.4244444444445px;top:555.04px;font-size:11px;font-weight:normal;color:#262626;line-height:12.65px;white-space:pre;will-change:transform;transform:scaleX(0.8755555555555551);transform-origin:0 0;;letter-spacing:1px;">rejected</div>
<div style="position:absolute;left:489.8627118644068px;top:555.04px;font-size:11px;font-weight:normal;color:#262626;line-height:12.65px;white-space:pre;will-change:transform;transform:scaleX(0.8372881355932209);transform-origin:0 0;;letter-spacing:1px;">successful</div>
<div style="position:absolute;left:26.948484848484846px;top:92.14px;font-size:12px;font-weight:normal;color:#262626;line-height:13.80px;white-space:pre;will-change:transform;transform:scaleX(0.9515151515151514);transform-origin:0 0;;letter-spacing:0.7px;">Rhino Monitoring</div>
<div style="position:absolute;left:47.4px;top:110.14px;font-size:12px;font-weight:normal;color:#262626;line-height:13.80px;white-space:pre;will-change:transform;transform:scaleX(0.9188679245283018);transform-origin:0 0;;letter-spacing:0.7px;">Activities</div>
<div style="position:absolute;left:47.4px;top:128.14px;font-size:12px;font-weight:normal;color:#262626;line-height:13.80px;white-space:pre;will-change:transform;transform:scaleX(0.9455555555555555);transform-origin:0 0;;letter-spacing:0.7px;">ActivityHandler</div>
<div style="position:absolute;left:46.87123287671233px;top:147.14px;font-size:12px;font-weight:normal;color:#262626;line-height:13.80px;white-space:pre;will-change:transform;transform:scaleX(0.9287671232876712);transform-origin:0 0;;letter-spacing:0.7px;">EventRouter</div>
<div style="position:absolute;left:46.8974358974359px;top:166.14px;font-size:12px;font-weight:normal;color:#262626;line-height:13.80px;white-space:pre;will-change:transform;transform:scaleX(0.9025641025641027);transform-origin:0 0;;letter-spacing:0.7px;">Events</div>
<div style="position:absolute;left:46.48222222222222px;top:184.14px;font-size:12px;font-weight:normal;color:#262626;line-height:13.80px;white-space:pre;will-change:transform;transform:scaleX(0.9177777777777778);transform-origin:0 0;;letter-spacing:0.7px;">IN-SIS-SignalwareCAP</div>
<div style="position:absolute;left:47.8px;top:203.14px;font-size:12px;font-weight:normal;color:#262626;line-height:13.80px;white-space:pre;will-change:transform;transform:scaleX(0.7880000000000001);transform-origin:0 0;;letter-spacing:0.7px;">JVM</div>
<div style="position:absolute;left:46.46545454545454px;top:222.14px;font-size:12px;font-weight:normal;color:#262626;line-height:13.80px;white-space:pre;will-change:transform;transform:scaleX(0.9345454545454543);transform-origin:0 0;;letter-spacing:0.7px;">LicenseAccounting</div>
<div style="position:absolute;left:46.451764705882354px;top:240.14px;font-size:12px;font-weight:normal;color:#262626;line-height:13.80px;white-space:pre;will-change:transform;transform:scaleX(0.948235294117647);transform-origin:0 0;;letter-spacing:0.7px;">LockManagers</div>
<div style="position:absolute;left:46.42469135802469px;top:258.14px;font-size:12px;font-weight:normal;color:#262626;line-height:13.80px;white-space:pre;will-change:transform;transform:scaleX(0.9753086419753086);transform-origin:0 0;;letter-spacing:0.7px;">MemDB-Local</div>
<div style="position:absolute;left:46.42035398230088px;top:276.14px;font-size:12px;font-weight:normal;color:#262626;line-height:13.80px;white-space:pre;will-change:transform;transform:scaleX(0.979646017699115);transform-origin:0 0;;letter-spacing:0.7px;">MemDB-Replicated</div>
<div style="position:absolute;left:46.44571428571428px;top:294.14px;font-size:12px;font-weight:normal;color:#262626;line-height:13.80px;white-space:pre;will-change:transform;transform:scaleX(0.9542857142857144);transform-origin:0 0;;letter-spacing:0.7px;">ObjectPools</div>
<div style="position:absolute;left:46.497297297297294px;top:312.14px;font-size:12px;font-weight:normal;color:#262626;line-height:13.80px;white-space:pre;will-change:transform;transform:scaleX(0.9027027027027028);transform-origin:0 0;;letter-spacing:0.7px;">SLEE-Usage</div>
<div style="position:absolute;left:46.44903846153846px;top:330.14px;font-size:12px;font-weight:normal;color:#262626;line-height:13.80px;white-space:pre;will-change:transform;transform:scaleX(0.9509615384615385);transform-origin:0 0;;letter-spacing:0.7px;">Savanna-Protocol</div>
<div style="position:absolute;left:46.506px;top:348.14px;font-size:12px;font-weight:normal;color:#262626;line-height:13.80px;white-space:pre;will-change:transform;transform:scaleX(0.8939999999999999);transform-origin:0 0;;letter-spacing:0.7px;">Services</div>
<div style="position:absolute;left:46.4445652173913px;top:367.14px;font-size:12px;font-weight:normal;color:#262626;line-height:13.80px;white-space:pre;will-change:transform;transform:scaleX(0.9554347826086957);transform-origin:0 0;;letter-spacing:0.7px;">StagingThreads</div>
<div style="position:absolute;left:46.47846153846154px;top:387.14px;font-size:12px;font-weight:normal;color:#262626;line-height:13.80px;white-space:pre;will-change:transform;transform:scaleX(0.9215384615384615);transform-origin:0 0;;letter-spacing:0.7px;">SystemInfo</div>
<div style="position:absolute;left:47.4px;top:407.14px;font-size:12px;font-weight:normal;color:#262626;line-height:13.80px;white-space:pre;will-change:transform;transform:scaleX(0.9434210526315788);transform-origin:0 0;;letter-spacing:0.7px;">Transactions</div>
<svg style="position:absolute;left:0;top:0" width="200" height="609" shape-rendering="crispEdges"><defs><linearGradient id="fold" x1="0" y1="0" x2="0" y2="1"><stop offset="0" stop-color="#ffffff"/><stop offset="0.25" stop-color="#f4f8fc"/><stop offset="1" stop-color="#aac4e4"/></linearGradient><linearGradient id="docg" x1="0" y1="0" x2="1" y2="0"><stop offset="0" stop-color="#c4d8f0"/><stop offset="0.2" stop-color="#ffffff"/><stop offset="1" stop-color="#f4f8fc"/></linearGradient></defs><rect x="8" y="94" width="14" height="9" fill="url(#fold)"/><rect x="17" y="91" width="6" height="1" fill="#4f74c6"/><rect x="16" y="92" width="7" height="1" fill="#4f74c6"/><rect x="16" y="93" width="6" height="1" fill="#a9c2ea"/><rect x="8" y="93" width="8" height="1" fill="#2a2a2a"/><rect x="16" y="94" width="7" height="1" fill="#2a2a2a"/><rect x="7" y="94" width="1" height="9" fill="#2a2a2a"/><rect x="22" y="93" width="1" height="10" fill="#2a2a2a"/><rect x="7" y="103" width="16" height="1" fill="#2a2a2a"/><rect x="8" y="94" width="1" height="8" fill="#ffffff"/><rect x="14" y="105" width="1" height="308" fill="#b8cfe5"/><rect x="28" y="112" width="14" height="9" fill="url(#fold)"/><rect x="37" y="109" width="6" height="1" fill="#4f74c6"/><rect x="36" y="110" width="7" height="1" fill="#4f74c6"/><rect x="36" y="111" width="6" height="1" fill="#a9c2ea"/><rect x="28" y="111" width="8" height="1" fill="#2a2a2a"/><rect x="36" y="112" width="7" height="1" fill="#2a2a2a"/><rect x="27" y="112" width="1" height="9" fill="#2a2a2a"/><rect x="42" y="111" width="1" height="10" fill="#2a2a2a"/><rect x="27" y="121" width="16" height="1" fill="#2a2a2a"/><rect x="28" y="112" width="1" height="8" fill="#ffffff"/><rect x="13" y="112" width="4" height="6" fill="#5a7cc8"/><rect x="12" y="113" width="6" height="4" fill="#5a7cc8"/><rect x="14" y="114" width="2" height="2" fill="#ffffff"/><rect x="18" y="114" width="4" height="2" fill="#5a7cc8"/><rect x="22" y="114" width="1" height="2" fill="#b8cfe5"/><rect x="28" y="130" width="14" height="9" fill="url(#fold)"/><rect x="37" y="127" width="6" height="1" fill="#4f74c6"/><rect x="36" y="128" width="7" height="1" fill="#4f74c6"/><rect x="36" y="129" width="6" height="1" fill="#a9c2ea"/><rect x="28" y="129" width="8" height="1" fill="#2a2a2a"/><rect x="36" y="130" width="7" height="1" fill="#2a2a2a"/><rect x="27" y="130" width="1" height="9" fill="#2a2a2a"/><rect x="42" y="129" width="1" height="10" fill="#2a2a2a"/><rect x="27" y="139" width="16" height="1" fill="#2a2a2a"/><rect x="28" y="130" width="1" height="8" fill="#ffffff"/><rect x="13" y="130" width="4" height="6" fill="#5a7cc8"/><rect x="12" y="131" width="6" height="4" fill="#5a7cc8"/><rect x="14" y="132" width="2" height="2" fill="#ffffff"/><rect x="18" y="132" width="4" height="2" fill="#5a7cc8"/><rect x="22" y="132" width="1" height="2" fill="#b8cfe5"/><rect x="15" y="152" width="9" height="1" fill="#b8cfe5"/><path d="M30 145 H38 L41 150 V159 H30 Z" fill="url(#docg)"/><rect x="29" y="144" width="10" height="1" fill="#2f62aa"/><rect x="29" y="144" width="1" height="16" fill="#2f62aa"/><rect x="29" y="159" width="13" height="1" fill="#2f62aa"/><rect x="41" y="150" width="1" height="10" fill="#2f62aa"/><rect x="39" y="145" width="1" height="1" fill="#2f62aa"/><rect x="39" y="146" width="1" height="1" fill="#2f62aa"/><rect x="40" y="147" width="1" height="1" fill="#2f62aa"/><rect x="40" y="148" width="1" height="1" fill="#2f62aa"/><rect x="41" y="149" width="1" height="1" fill="#2f62aa"/><rect x="38" y="146" width="1" height="1" fill="#7c9ccc"/><rect x="39" y="147" width="1" height="1" fill="#7c9ccc"/><rect x="40" y="149" width="1" height="1" fill="#7c9ccc"/><rect x="30" y="158" width="11" height="1" fill="#d4e4f4"/><rect x="28" y="168" width="14" height="9" fill="url(#fold)"/><rect x="37" y="165" width="6" height="1" fill="#4f74c6"/><rect x="36" y="166" width="7" height="1" fill="#4f74c6"/><rect x="36" y="167" width="6" height="1" fill="#a9c2ea"/><rect x="28" y="167" width="8" height="1" fill="#2a2a2a"/><rect x="36" y="168" width="7" height="1" fill="#2a2a2a"/><rect x="27" y="168" width="1" height="9" fill="#2a2a2a"/><rect x="42" y="167" width="1" height="10" fill="#2a2a2a"/><rect x="27" y="177" width="16" height="1" fill="#2a2a2a"/><rect x="28" y="168" width="1" height="8" fill="#ffffff"/><rect x="13" y="168" width="4" height="6" fill="#5a7cc8"/><rect x="12" y="169" width="6" height="4" fill="#5a7cc8"/><rect x="14" y="170" width="2" height="2" fill="#ffffff"/><rect x="18" y="170" width="4" height="2" fill="#5a7cc8"/><rect x="22" y="170" width="1" height="2" fill="#b8cfe5"/><rect x="28" y="186" width="14" height="9" fill="url(#fold)"/><rect x="37" y="183" width="6" height="1" fill="#4f74c6"/><rect x="36" y="184" width="7" height="1" fill="#4f74c6"/><rect x="36" y="185" width="6" height="1" fill="#a9c2ea"/><rect x="28" y="185" width="8" height="1" fill="#2a2a2a"/><rect x="36" y="186" width="7" height="1" fill="#2a2a2a"/><rect x="27" y="186" width="1" height="9" fill="#2a2a2a"/><rect x="42" y="185" width="1" height="10" fill="#2a2a2a"/><rect x="27" y="195" width="16" height="1" fill="#2a2a2a"/><rect x="28" y="186" width="1" height="8" fill="#ffffff"/><rect x="13" y="186" width="4" height="6" fill="#5a7cc8"/><rect x="12" y="187" width="6" height="4" fill="#5a7cc8"/><rect x="14" y="188" width="2" height="2" fill="#ffffff"/><rect x="18" y="188" width="4" height="2" fill="#5a7cc8"/><rect x="22" y="188" width="1" height="2" fill="#b8cfe5"/><rect x="15" y="208" width="9" height="1" fill="#b8cfe5"/><path d="M30 201 H38 L41 206 V215 H30 Z" fill="url(#docg)"/><rect x="29" y="200" width="10" height="1" fill="#2f62aa"/><rect x="29" y="200" width="1" height="16" fill="#2f62aa"/><rect x="29" y="215" width="13" height="1" fill="#2f62aa"/><rect x="41" y="206" width="1" height="10" fill="#2f62aa"/><rect x="39" y="201" width="1" height="1" fill="#2f62aa"/><rect x="39" y="202" width="1" height="1" fill="#2f62aa"/><rect x="40" y="203" width="1" height="1" fill="#2f62aa"/><rect x="40" y="204" width="1" height="1" fill="#2f62aa"/><rect x="41" y="205" width="1" height="1" fill="#2f62aa"/><rect x="38" y="202" width="1" height="1" fill="#7c9ccc"/><rect x="39" y="203" width="1" height="1" fill="#7c9ccc"/><rect x="40" y="205" width="1" height="1" fill="#7c9ccc"/><rect x="30" y="214" width="11" height="1" fill="#d4e4f4"/><rect x="28" y="224" width="14" height="9" fill="url(#fold)"/><rect x="37" y="221" width="6" height="1" fill="#4f74c6"/><rect x="36" y="222" width="7" height="1" fill="#4f74c6"/><rect x="36" y="223" width="6" height="1" fill="#a9c2ea"/><rect x="28" y="223" width="8" height="1" fill="#2a2a2a"/><rect x="36" y="224" width="7" height="1" fill="#2a2a2a"/><rect x="27" y="224" width="1" height="9" fill="#2a2a2a"/><rect x="42" y="223" width="1" height="10" fill="#2a2a2a"/><rect x="27" y="233" width="16" height="1" fill="#2a2a2a"/><rect x="28" y="224" width="1" height="8" fill="#ffffff"/><rect x="13" y="224" width="4" height="6" fill="#5a7cc8"/><rect x="12" y="225" width="6" height="4" fill="#5a7cc8"/><rect x="14" y="226" width="2" height="2" fill="#ffffff"/><rect x="18" y="226" width="4" height="2" fill="#5a7cc8"/><rect x="22" y="226" width="1" height="2" fill="#b8cfe5"/><rect x="28" y="242" width="14" height="9" fill="url(#fold)"/><rect x="37" y="239" width="6" height="1" fill="#4f74c6"/><rect x="36" y="240" width="7" height="1" fill="#4f74c6"/><rect x="36" y="241" width="6" height="1" fill="#a9c2ea"/><rect x="28" y="241" width="8" height="1" fill="#2a2a2a"/><rect x="36" y="242" width="7" height="1" fill="#2a2a2a"/><rect x="27" y="242" width="1" height="9" fill="#2a2a2a"/><rect x="42" y="241" width="1" height="10" fill="#2a2a2a"/><rect x="27" y="251" width="16" height="1" fill="#2a2a2a"/><rect x="28" y="242" width="1" height="8" fill="#ffffff"/><rect x="13" y="242" width="4" height="6" fill="#5a7cc8"/><rect x="12" y="243" width="6" height="4" fill="#5a7cc8"/><rect x="14" y="244" width="2" height="2" fill="#ffffff"/><rect x="18" y="244" width="4" height="2" fill="#5a7cc8"/><rect x="22" y="244" width="1" height="2" fill="#b8cfe5"/><rect x="28" y="260" width="14" height="9" fill="url(#fold)"/><rect x="37" y="257" width="6" height="1" fill="#4f74c6"/><rect x="36" y="258" width="7" height="1" fill="#4f74c6"/><rect x="36" y="259" width="6" height="1" fill="#a9c2ea"/><rect x="28" y="259" width="8" height="1" fill="#2a2a2a"/><rect x="36" y="260" width="7" height="1" fill="#2a2a2a"/><rect x="27" y="260" width="1" height="9" fill="#2a2a2a"/><rect x="42" y="259" width="1" height="10" fill="#2a2a2a"/><rect x="27" y="269" width="16" height="1" fill="#2a2a2a"/><rect x="28" y="260" width="1" height="8" fill="#ffffff"/><rect x="13" y="260" width="4" height="6" fill="#5a7cc8"/><rect x="12" y="261" width="6" height="4" fill="#5a7cc8"/><rect x="14" y="262" width="2" height="2" fill="#ffffff"/><rect x="18" y="262" width="4" height="2" fill="#5a7cc8"/><rect x="22" y="262" width="1" height="2" fill="#b8cfe5"/><rect x="28" y="278" width="14" height="9" fill="url(#fold)"/><rect x="37" y="275" width="6" height="1" fill="#4f74c6"/><rect x="36" y="276" width="7" height="1" fill="#4f74c6"/><rect x="36" y="277" width="6" height="1" fill="#a9c2ea"/><rect x="28" y="277" width="8" height="1" fill="#2a2a2a"/><rect x="36" y="278" width="7" height="1" fill="#2a2a2a"/><rect x="27" y="278" width="1" height="9" fill="#2a2a2a"/><rect x="42" y="277" width="1" height="10" fill="#2a2a2a"/><rect x="27" y="287" width="16" height="1" fill="#2a2a2a"/><rect x="28" y="278" width="1" height="8" fill="#ffffff"/><rect x="13" y="278" width="4" height="6" fill="#5a7cc8"/><rect x="12" y="279" width="6" height="4" fill="#5a7cc8"/><rect x="14" y="280" width="2" height="2" fill="#ffffff"/><rect x="18" y="280" width="4" height="2" fill="#5a7cc8"/><rect x="22" y="280" width="1" height="2" fill="#b8cfe5"/><rect x="28" y="296" width="14" height="9" fill="url(#fold)"/><rect x="37" y="293" width="6" height="1" fill="#4f74c6"/><rect x="36" y="294" width="7" height="1" fill="#4f74c6"/><rect x="36" y="295" width="6" height="1" fill="#a9c2ea"/><rect x="28" y="295" width="8" height="1" fill="#2a2a2a"/><rect x="36" y="296" width="7" height="1" fill="#2a2a2a"/><rect x="27" y="296" width="1" height="9" fill="#2a2a2a"/><rect x="42" y="295" width="1" height="10" fill="#2a2a2a"/><rect x="27" y="305" width="16" height="1" fill="#2a2a2a"/><rect x="28" y="296" width="1" height="8" fill="#ffffff"/><rect x="13" y="296" width="4" height="6" fill="#5a7cc8"/><rect x="12" y="297" width="6" height="4" fill="#5a7cc8"/><rect x="14" y="298" width="2" height="2" fill="#ffffff"/><rect x="18" y="298" width="4" height="2" fill="#5a7cc8"/><rect x="22" y="298" width="1" height="2" fill="#b8cfe5"/><rect x="28" y="314" width="14" height="9" fill="url(#fold)"/><rect x="37" y="311" width="6" height="1" fill="#4f74c6"/><rect x="36" y="312" width="7" height="1" fill="#4f74c6"/><rect x="36" y="313" width="6" height="1" fill="#a9c2ea"/><rect x="28" y="313" width="8" height="1" fill="#2a2a2a"/><rect x="36" y="314" width="7" height="1" fill="#2a2a2a"/><rect x="27" y="314" width="1" height="9" fill="#2a2a2a"/><rect x="42" y="313" width="1" height="10" fill="#2a2a2a"/><rect x="27" y="323" width="16" height="1" fill="#2a2a2a"/><rect x="28" y="314" width="1" height="8" fill="#ffffff"/><rect x="13" y="314" width="4" height="6" fill="#5a7cc8"/><rect x="12" y="315" width="6" height="4" fill="#5a7cc8"/><rect x="14" y="316" width="2" height="2" fill="#ffffff"/><rect x="18" y="316" width="4" height="2" fill="#5a7cc8"/><rect x="22" y="316" width="1" height="2" fill="#b8cfe5"/><rect x="28" y="332" width="14" height="9" fill="url(#fold)"/><rect x="37" y="329" width="6" height="1" fill="#4f74c6"/><rect x="36" y="330" width="7" height="1" fill="#4f74c6"/><rect x="36" y="331" width="6" height="1" fill="#a9c2ea"/><rect x="28" y="331" width="8" height="1" fill="#2a2a2a"/><rect x="36" y="332" width="7" height="1" fill="#2a2a2a"/><rect x="27" y="332" width="1" height="9" fill="#2a2a2a"/><rect x="42" y="331" width="1" height="10" fill="#2a2a2a"/><rect x="27" y="341" width="16" height="1" fill="#2a2a2a"/><rect x="28" y="332" width="1" height="8" fill="#ffffff"/><rect x="13" y="332" width="4" height="6" fill="#5a7cc8"/><rect x="12" y="333" width="6" height="4" fill="#5a7cc8"/><rect x="14" y="334" width="2" height="2" fill="#ffffff"/><rect x="18" y="334" width="4" height="2" fill="#5a7cc8"/><rect x="22" y="334" width="1" height="2" fill="#b8cfe5"/><rect x="28" y="350" width="14" height="9" fill="url(#fold)"/><rect x="37" y="347" width="6" height="1" fill="#4f74c6"/><rect x="36" y="348" width="7" height="1" fill="#4f74c6"/><rect x="36" y="349" width="6" height="1" fill="#a9c2ea"/><rect x="28" y="349" width="8" height="1" fill="#2a2a2a"/><rect x="36" y="350" width="7" height="1" fill="#2a2a2a"/><rect x="27" y="350" width="1" height="9" fill="#2a2a2a"/><rect x="42" y="349" width="1" height="10" fill="#2a2a2a"/><rect x="27" y="359" width="16" height="1" fill="#2a2a2a"/><rect x="28" y="350" width="1" height="8" fill="#ffffff"/><rect x="13" y="350" width="4" height="6" fill="#5a7cc8"/><rect x="12" y="351" width="6" height="4" fill="#5a7cc8"/><rect x="14" y="352" width="2" height="2" fill="#ffffff"/><rect x="18" y="352" width="4" height="2" fill="#5a7cc8"/><rect x="22" y="352" width="1" height="2" fill="#b8cfe5"/><rect x="15" y="372" width="9" height="1" fill="#b8cfe5"/><path d="M30 365 H38 L41 370 V379 H30 Z" fill="url(#docg)"/><rect x="29" y="364" width="10" height="1" fill="#2f62aa"/><rect x="29" y="364" width="1" height="16" fill="#2f62aa"/><rect x="29" y="379" width="13" height="1" fill="#2f62aa"/><rect x="41" y="370" width="1" height="10" fill="#2f62aa"/><rect x="39" y="365" width="1" height="1" fill="#2f62aa"/><rect x="39" y="366" width="1" height="1" fill="#2f62aa"/><rect x="40" y="367" width="1" height="1" fill="#2f62aa"/><rect x="40" y="368" width="1" height="1" fill="#2f62aa"/><rect x="41" y="369" width="1" height="1" fill="#2f62aa"/><rect x="38" y="366" width="1" height="1" fill="#7c9ccc"/><rect x="39" y="367" width="1" height="1" fill="#7c9ccc"/><rect x="40" y="369" width="1" height="1" fill="#7c9ccc"/><rect x="30" y="378" width="11" height="1" fill="#d4e4f4"/><rect x="15" y="392" width="9" height="1" fill="#b8cfe5"/><path d="M30 385 H38 L41 390 V399 H30 Z" fill="url(#docg)"/><rect x="29" y="384" width="10" height="1" fill="#2f62aa"/><rect x="29" y="384" width="1" height="16" fill="#2f62aa"/><rect x="29" y="399" width="13" height="1" fill="#2f62aa"/><rect x="41" y="390" width="1" height="10" fill="#2f62aa"/><rect x="39" y="385" width="1" height="1" fill="#2f62aa"/><rect x="39" y="386" width="1" height="1" fill="#2f62aa"/><rect x="40" y="387" width="1" height="1" fill="#2f62aa"/><rect x="40" y="388" width="1" height="1" fill="#2f62aa"/><rect x="41" y="389" width="1" height="1" fill="#2f62aa"/><rect x="38" y="386" width="1" height="1" fill="#7c9ccc"/><rect x="39" y="387" width="1" height="1" fill="#7c9ccc"/><rect x="40" y="389" width="1" height="1" fill="#7c9ccc"/><rect x="30" y="398" width="11" height="1" fill="#d4e4f4"/><rect x="15" y="412" width="9" height="1" fill="#b8cfe5"/><path d="M30 405 H38 L41 410 V419 H30 Z" fill="url(#docg)"/><rect x="29" y="404" width="10" height="1" fill="#2f62aa"/><rect x="29" y="404" width="1" height="16" fill="#2f62aa"/><rect x="29" y="419" width="13" height="1" fill="#2f62aa"/><rect x="41" y="410" width="1" height="10" fill="#2f62aa"/><rect x="39" y="405" width="1" height="1" fill="#2f62aa"/><rect x="39" y="406" width="1" height="1" fill="#2f62aa"/><rect x="40" y="407" width="1" height="1" fill="#2f62aa"/><rect x="40" y="408" width="1" height="1" fill="#2f62aa"/><rect x="41" y="409" width="1" height="1" fill="#2f62aa"/><rect x="38" y="406" width="1" height="1" fill="#7c9ccc"/><rect x="39" y="407" width="1" height="1" fill="#7c9ccc"/><rect x="40" y="409" width="1" height="1" fill="#7c9ccc"/><rect x="30" y="418" width="11" height="1" fill="#d4e4f4"/></svg>
</body></html>
